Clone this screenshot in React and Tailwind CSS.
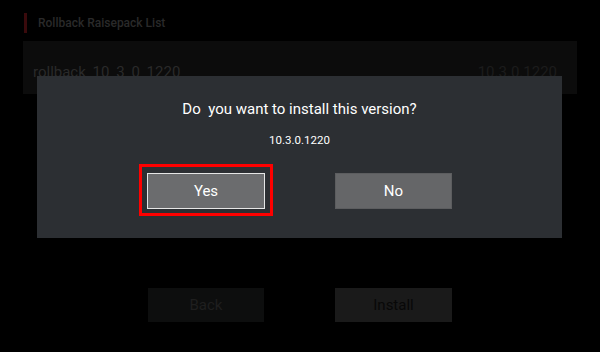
import React from "react";

const font = { fontFamily: 'Roboto, "Noto Sans", sans-serif' };

const App = () => {
  return (
    <div className="relative h-[352px] w-[600px] overflow-hidden bg-black" style={font}>
      {/* Page behind the dialog */}
      <div className="flex h-full flex-col px-[23px] pt-[13px]">
        <div className="flex items-center gap-[11px] pl-px">
          <div className="h-[20px] w-[3px] bg-[#3a0a0c]"></div>
          <span className="text-[12px] font-medium text-[#2a2a2a]">Rollback Raisepack List</span>
        </div>

        <div className="mt-[8px] flex h-[53px] items-center justify-between bg-[#0c0c0c] pl-[10px] pr-[20px] pt-[10px]">
          <span className="text-[15px] text-[#2a2a2a]">rollback_10_3_0_1220</span>
          <span className="text-[15px] text-[#1c1c1c]">10.3.0.1220</span>
        </div>

        <div className="mt-[194px] flex gap-[71px] pl-[125px]">
          <div className="flex h-[34px] w-[116px] items-center justify-center bg-[#0d0e0e] text-[15px] text-[#1f1f1f]">
            Back
          </div>
          <div className="flex h-[34px] w-[117px] items-center justify-center bg-[#1a1a1a] text-[15px] text-[#080808]">
            Install
          </div>
        </div>
      </div>

      {/* Confirm dialog */}
      <div className="absolute left-[37px] top-[76px] flex h-[162px] w-[525px] flex-col items-center bg-[#2c2f33]">
        <div className="mt-[22px] whitespace-pre text-[15px] text-white">Do  you want to install this version?</div>
        <div className="mt-[11px] text-[11.5px] text-white">10.3.0.1220</div>

        <div className="mt-[15px] flex w-full items-start pl-[102px]">
          <div className="border-[3px] border-[#ff0000] px-[5px] pb-[4px] pt-[6px]">
            <div className="flex h-[36px] w-[118px] items-center justify-center border border-[#e6e6e6] bg-[#6b6c6e] text-[15px] text-white">
              Yes
            </div>
          </div>
          <div className="ml-[62px] mt-[9px] flex h-[36px] w-[117px] items-center justify-center border border-[#5c5d5f] bg-[#656668] text-[15px] text-white">
            No
          </div>
        </div>
      </div>
    </div>
  );
};

export default App;
